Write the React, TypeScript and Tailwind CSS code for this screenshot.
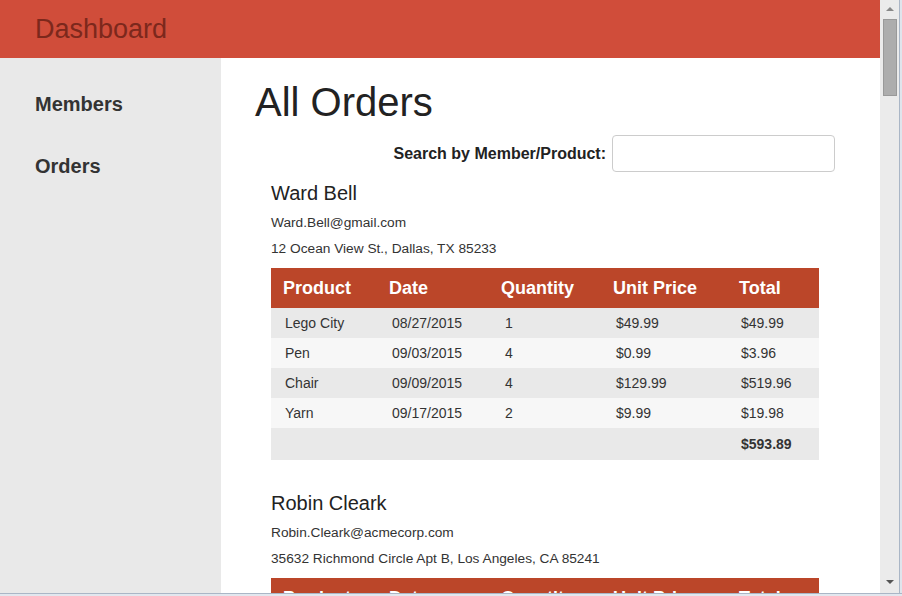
import React from 'react';

type Item = { product: string; date: string; qty: number; price: string; total: string };
type Order = { name: string; email: string; address: string; items: Item[]; sum: string };

const orders: Order[] = [
  {
    name: 'Ward Bell',
    email: 'Ward.Bell@gmail.com',
    address: '12 Ocean View St., Dallas, TX 85233',
    items: [
      { product: 'Lego City', date: '08/27/2015', qty: 1, price: '$49.99', total: '$49.99' },
      { product: 'Pen', date: '09/03/2015', qty: 4, price: '$0.99', total: '$3.96' },
      { product: 'Chair', date: '09/09/2015', qty: 4, price: '$129.99', total: '$519.96' },
      { product: 'Yarn', date: '09/17/2015', qty: 2, price: '$9.99', total: '$19.98' },
    ],
    sum: '$593.89',
  },
  {
    name: 'Robin Cleark',
    email: 'Robin.Cleark@acmecorp.com',
    address: '35632 Richmond Circle Apt B, Los Angeles, CA 85241',
    items: [
      { product: 'Lamp', date: '09/02/2015', qty: 1, price: '$39.99', total: '$39.99' },
      { product: 'Pillow', date: '09/12/2015', qty: 2, price: '$19.99', total: '$39.98' },
    ],
    sum: '$79.97',
  },
];

function OrderBlock({ order }: { order: Order }) {
  return (
    <div className="px-4 pt-[9px]">
      <div className="text-[20px] leading-6 text-[#222]">{order.name}</div>
      <div className="mt-[9px] text-[13.7px] leading-[18px] text-[#333]">{order.email}</div>
      <div className="mt-2 text-[13.7px] leading-[18px] text-[#333]">{order.address}</div>
      <table className="mt-[10px] w-[548px] table-fixed border-collapse">
        <colgroup>
          <col className="w-[106px]" />
          <col className="w-[112px]" />
          <col className="w-[112px]" />
          <col className="w-[126px]" />
          <col className="w-[92px]" />
        </colgroup>
        <thead>
          <tr className="h-10 bg-[#bb4629] text-left text-[18px] font-bold text-white">
            <th className="pl-3">Product</th>
            <th className="pl-3">Date</th>
            <th className="pl-3">Quantity</th>
            <th className="pl-3">Unit Price</th>
            <th className="pl-3">Total</th>
          </tr>
        </thead>
        <tbody className="text-[14px] text-[#333]">
          {order.items.map((it, i) => (
            <tr key={i} className={`h-[30px] ${i % 2 === 0 ? 'bg-[#e9e9e9]' : 'bg-[#f7f7f7]'}`}>
              <td className="pl-[14px]">{it.product}</td>
              <td className="pl-[15px]">{it.date}</td>
              <td className="pl-[16px]">{it.qty}</td>
              <td className="pl-[15px]">{it.price}</td>
              <td className="pl-[14px]">{it.total}</td>
            </tr>
          ))}
          <tr className="h-[32px] bg-[#e9e9e9]">
            <td colSpan={4}></td>
            <td className="pl-[14px] font-bold">{order.sum}</td>
          </tr>
        </tbody>
      </table>
    </div>
  );
}

export default function App() {
  return (
    <div className="flex h-[596px] w-[902px] flex-col overflow-hidden bg-white font-['Liberation_Sans',Arial,sans-serif]">
      <div className="flex h-[593px] min-h-0">
        <div className="flex min-w-0 flex-1 flex-col">
          <div className="flex h-[58px] shrink-0 items-center bg-[#d04d3a] pl-[35px]">
            <span className="text-[27px] leading-none text-[#7c281c]">Dashboard</span>
          </div>
          <div className="flex min-h-0 flex-1">
            <nav className="w-[221px] shrink-0 bg-[#e9e9e9] pl-[35px] pt-[34px] text-[20px] font-bold text-[#333]">
              <div className="leading-6">Members</div>
              <div className="mt-[38px] leading-6">Orders</div>
            </nav>
            <main className="min-w-0 flex-1 overflow-hidden pl-[34px] pt-[21px]">
              <div className="w-[580px]">
                <h1 className="text-[40px] leading-[46px] text-[#222]">All Orders</h1>
                <div className="mt-[10px] flex items-center justify-end gap-[6px]">
                  <label className="text-[16px] font-bold text-[#222]">Search by Member/Product:</label>
                  <input className="h-[37px] w-[223px] rounded-[4px] border border-[#cccccc] bg-white px-2 outline-none" />
                </div>
                <div className="flex flex-col gap-[22px]">
                  {orders.map((o) => (
                    <OrderBlock key={o.name} order={o} />
                  ))}
                </div>
              </div>
            </main>
          </div>
        </div>
        <div className="flex w-[22px] shrink-0">
          <div className="flex w-[19px] flex-col items-center bg-[#ebebeb]">
            <div className="mt-[7px] h-0 w-0 border-x-[4px] border-b-[4px] border-x-transparent border-b-[#888]" />
            <div className="mt-[8px] h-[77px] w-[14px] border border-[#999] bg-[#adadad]" />
            <div className="flex-1" />
            <div className="mb-[9px] h-0 w-0 border-x-[4px] border-t-[4px] border-x-transparent border-t-[#555]" />
          </div>
          <div className="w-[3px] border-l border-[#aab6c6] bg-[#dfe5ec]" />
        </div>
      </div>
      <div className="h-[3px] border-t border-[#aab6c6] bg-[#e2e7ee]" />
    </div>
  );
}
